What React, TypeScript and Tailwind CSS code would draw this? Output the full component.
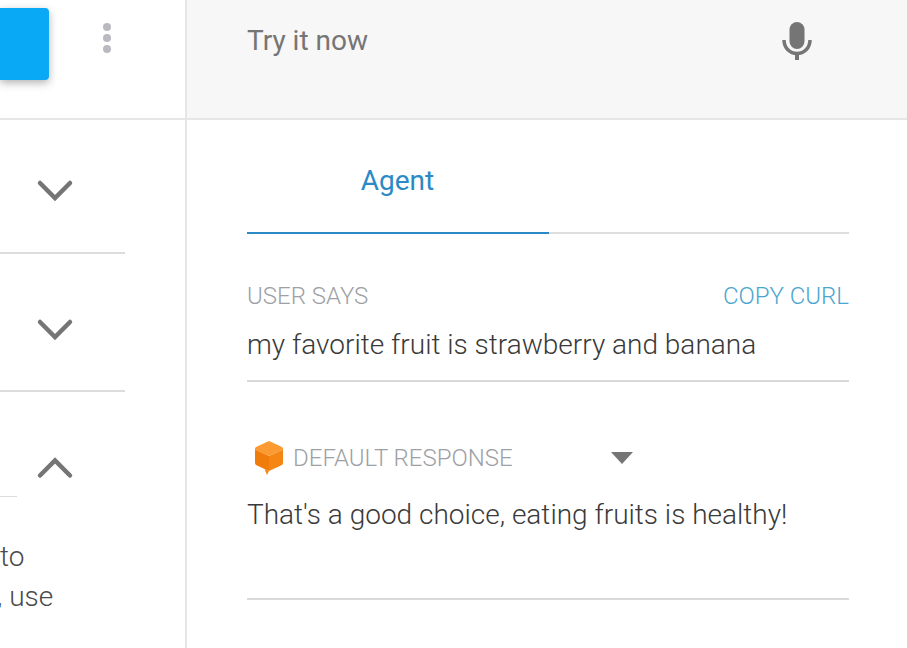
const font = { fontFamily: "Roboto, sans-serif" };

function Chevron({ up }: { up?: boolean }) {
  return (
    <svg width="38" height="24" viewBox="0 0 38 24" fill="none">
      <path
        d={up ? "M4 19.5 L19 4.5 L34 19.5" : "M4 4 L19 19 L34 4"}
        stroke="#757575"
        strokeWidth="4.5"
        strokeLinecap="round"
        strokeLinejoin="miter"
      />
    </svg>
  );
}

function Cube() {
  return (
    <svg width="30" height="36" viewBox="0 0 30 36">
      <path d="M15 1 L28 7 Q29.5 8 29 9.5 L15 16 L1 9.5 Q0.5 8 2 7 Z" fill="#fb9a32" />
      <path d="M1 9.5 L15 16 L15 31 L3 25.5 Q1 24.5 1 23 Z" fill="#f07c0c" />
      <path d="M29 9.5 L15 16 L15 31 L13 35 L10.5 29 L15 31 L27 25.5 Q29 24.5 29 23 Z" fill="#f68614" />
    </svg>
  );
}

export default function App() {
  return (
    <div className="flex h-[648px] w-[907px] overflow-hidden bg-white" style={font}>
      {/* left column */}
      <div className="flex w-[187px] shrink-0 flex-col border-r-2 border-[#e6e6e6]">
        <div className="flex h-[120px] shrink-0 items-start border-b-2 border-[#e6e6e6]">
          <div className="mt-2 h-[72px] w-[49px] rounded-r-[4px] bg-[#0aa9f5] shadow-[0_3px_8px_rgba(0,0,0,0.3)]" />
          <div className="ml-[54px] mt-[23px] flex flex-col gap-[3px]">
            <span className="h-2 w-2 rounded-full bg-[#b9b9c1]" />
            <span className="h-2 w-2 rounded-full bg-[#b9b9c1]" />
            <span className="h-2 w-2 rounded-full bg-[#b9b9c1]" />
          </div>
        </div>
        <div className="flex h-[134px] w-[125px] shrink-0 items-start border-b-2 border-[#dcdcdc] pt-[59px] pl-[36px]">
          <Chevron />
        </div>
        <div className="flex h-[138px] w-[125px] shrink-0 items-start border-b-2 border-[#dcdcdc] pt-[64px] pl-[36px]">
          <Chevron />
        </div>
        <div className="flex h-[146px] w-[125px] shrink-0 items-start pt-[64px]">
          <div className="mt-[40px] w-[17px] border-b border-[#dcdcdc]" />
          <div className="ml-[19px]">
            <Chevron up />
          </div>
        </div>
        <div className="text-[28px] leading-[40px] font-light whitespace-nowrap text-[#4a4a4a]">
          <p className="-mt-[1px]">to</p>
          <p className="-ml-[3px]">, use</p>
        </div>
      </div>

      {/* right column */}
      <div className="flex min-w-0 flex-1 flex-col">
        <div className="flex h-[120px] shrink-0 items-start justify-between border-b-2 border-[#e6e6e6] bg-[#f7f7f7] pr-[94px] pl-[60px]">
          <span className="mt-[23px] text-[28px] leading-9 text-[#757575]">Try it now</span>
          <svg className="mt-[20px]" width="32" height="42" viewBox="0 0 32 42" fill="none">
            <rect x="8.5" y="2" width="15" height="27" rx="7.5" fill="#757575" />
            <path d="M3 20 C3 28 9 33.5 16 33.5 C23 33.5 29 28 29 20" stroke="#757575" strokeWidth="3.5" />
            <rect x="14" y="32" width="4" height="8" fill="#757575" />
          </svg>
        </div>

        <div className="flex flex-col pr-[58px] pl-[60px]">
          <div className="flex h-[114px] shrink-0 border-b-2 border-[#dedede]">
            <div className="-mb-[2px] flex h-[114px] w-[302px] justify-center border-b-2 border-[#2b8ac6] pt-[43px] pr-[1px]">
              <span className="text-[28px] leading-9 text-[#2b8ac6]">Agent</span>
            </div>
          </div>

          <div className="mt-[48px] flex items-center justify-between text-[24px] leading-7 font-light">
            <span className="text-[#9da1a5]">USER SAYS</span>
            <span className="text-[#4ba6cf]">COPY CURL</span>
          </div>
          <div className="mt-[17px] h-[55px] border-b-2 border-[#d9d9d9] text-[28px] leading-[36px] font-light whitespace-nowrap text-[#3a3a3a]">
            my favorite fruit is strawberry and banana
          </div>

          <div className="mt-[57px] flex h-[38px] items-center">
            <div className="ml-[7px]">
              <Cube />
            </div>
            <span className="ml-[9px] w-[318px] text-[24px] leading-7 font-light text-[#9da1a5]">DEFAULT RESPONSE</span>
            <svg width="22" height="12" viewBox="0 0 22 12">
              <path d="M0 0 H22 L11 12 Z" fill="#757575" />
            </svg>
          </div>
          <div className="mt-[20px] h-[103px] border-b-2 border-[#d9d9d9] text-[28px] leading-[36px] font-light whitespace-nowrap text-[#3a3a3a]">
            That's a good choice, eating fruits is healthy!
          </div>
        </div>
      </div>
    </div>
  );
}
